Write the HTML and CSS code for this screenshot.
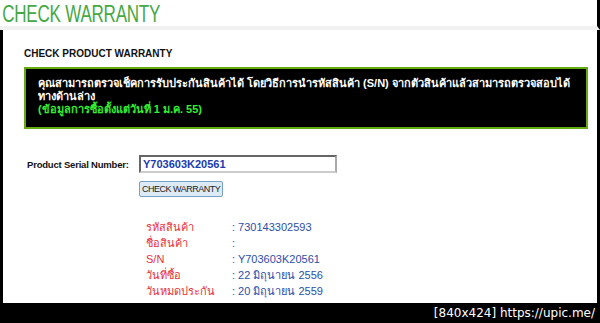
FILE: index.html
```html
<!DOCTYPE html>
<html lang="th">
    <head>
        <meta charset="UTF-8" />
        <meta name="viewport" content="width=device-width, initial-scale=1.0" />
        <title>Check Warranty</title>
        <link rel="stylesheet" href="styles.css">
    </head>
    <body>
        <div id="frame">
            <div id="header">
                <h1>CHECK WARRANTY</h1>
            </div>
            <div id="page">
                <h2>CHECK PRODUCT WARRANTY</h2>
                <!-- กล่องคำอธิบาย -->
                <div class="notice">
                    <p>คุณสามารถตรวจเช็คการรับประกันสินค้าได้ โดยวิธีการนำรหัสสินค้า (S/N) จากตัวสินค้าแล้วสามารถตรวจสอบได้ทางด้านล่าง</p>
                    <p class="notice-date">(ข้อมูลการซื้อตั้งแต่วันที่ 1 ม.ค. 55)</p>
                </div>
                <div id="searchDiv">
                    <label for="serial">Product Serial Number:</label>
                    <input type="text" id="serial" value="Y703603K20561" />
                </div>
                <div class="btn-row">
                    <button>CHECK WARRANTY</button>
                </div>
                <!-- ผลการตรวจสอบ -->
                <div id="results">
                    <span class="label">รหัสสินค้า</span><span class="value">: 730143302593</span>
                    <span class="label">ชื่อสินค้า</span><span class="value">:</span>
                    <span class="label">S/N</span><span class="value">: Y703603K20561</span>
                    <span class="label">วันที่ซื้อ</span><span class="value">: 22 มิถุนายน 2556</span>
                    <span class="label">วันหมดประกัน</span><span class="value">: 20 มิถุนายน 2559</span>
                </div>
            </div>
            <div id="stamp">[840x424] https://upic.me/</div>
        </div>
    </body>
</html>
```

FILE: styles.css
```css
body {
    margin: 0;
    background-color: #fff;
    font-family: "Liberation Sans", "DejaVu Sans", sans-serif;
}
#frame {
    width: 600px;
    height: 323px;
    overflow: hidden;
    display: flex;
    flex-direction: column;
}
#header {
    height: 26px;
    border-bottom: 4px solid #f1f1f1;
    border-right: 3px solid #000;
}
h1 {
    margin: 0;
    padding: 3px 0 0 3px;
    font-size: 23px;
    font-weight: normal;
    letter-spacing: -0.3px;
    line-height: 22px;
    color: #45a845;
    transform: scaleX(0.74);
    transform-origin: left center;
    white-space: nowrap;
}
#page {
    flex: 1;
    border-left: 3px solid #000;
    border-right: 3px solid #000;
    padding: 0 9px 0 21px;
}
h2 {
    margin: 17px 0 7px 0;
    font-size: 10px;
    font-weight: bold;
    line-height: 13px;
    color: #111;
}
.notice {
    background-color: #000;
    border: 2px solid #66aa11;
    padding: 8px 12px 11px 12px;
    color: #fff;
    font-size: 11px;
    font-weight: bold;
    line-height: 13px;
}
.notice p {
    margin: 0;
}
.notice-date {
    color: #33ee33;
}
#searchDiv {
    margin: 26px 0 0 3px;
    display: flex;
    align-items: center;
}
label {
    width: 112px;
    font-size: 9.5px;
    font-weight: bold;
    letter-spacing: -0.2px;
    color: #111;
}
#serial {
    width: 190px;
    height: 12px;
    padding: 1px 2px;
    border: 2px solid #666;
    border-right-color: #aaa;
    border-bottom-color: #ccc;
    font-family: "Liberation Sans", sans-serif;
    font-size: 11px;
    font-weight: bold;
    color: #1a3cb0;
}
.btn-row {
    margin: 5px 0 0 115px;
}
button {
    height: 16px;
    padding: 0 2px;
    white-space: nowrap;
    font-family: "Liberation Sans", sans-serif;
    font-size: 9px;
    letter-spacing: -0.5px;
    color: #222;
    background-color: #dceaf6;
    border: 1px solid #7aa0c8;
    border-radius: 2px;
}
#results {
    margin: 22px 0 0 122px;
    display: grid;
    grid-template-columns: 86px auto;
    grid-auto-rows: 16px;
    font-size: 11px;
    line-height: 16px;
}
.label {
    color: #e8303a;
}
.value {
    color: #2c4ea8;
}
#stamp {
    height: 20px;
    background-color: #000;
    color: #fff;
    text-align: right;
    padding-right: 5px;
    font-family: "DejaVu Sans", sans-serif;
    font-size: 12px;
    line-height: 20px;
}
```
